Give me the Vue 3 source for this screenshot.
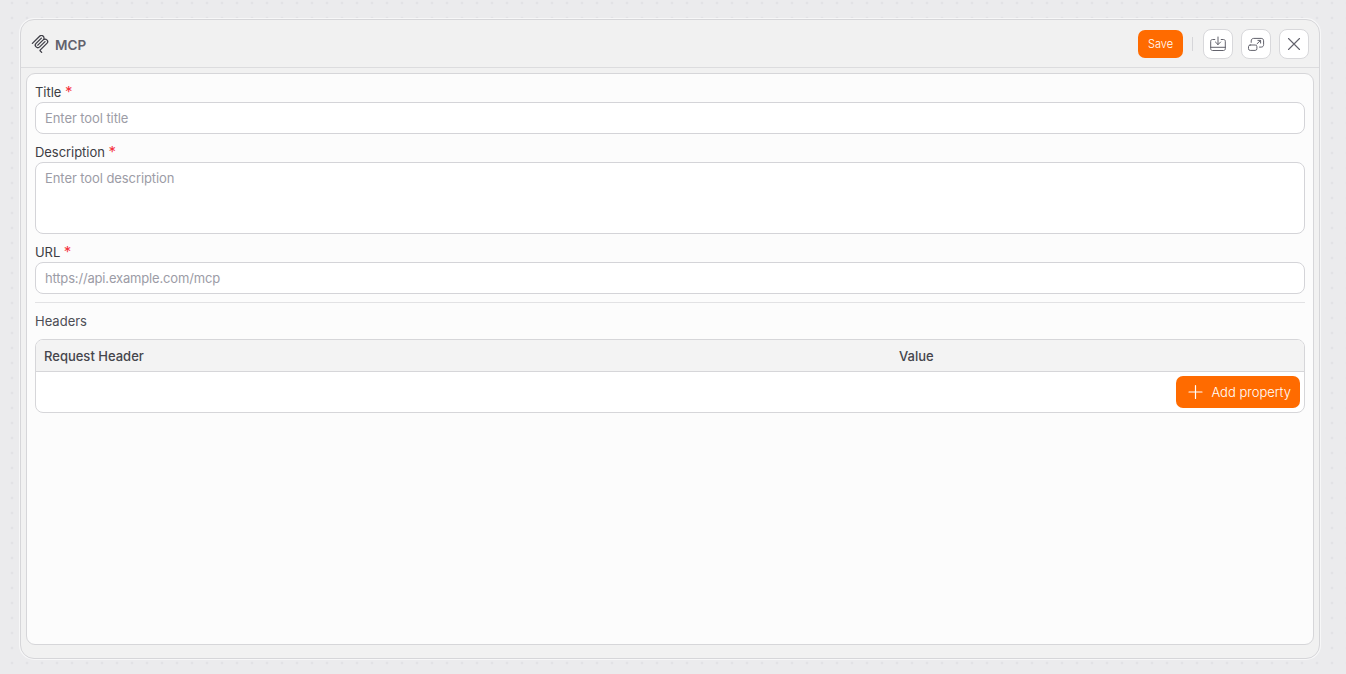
<script setup>
const headers = ['Request Header', 'Value']
</script>

<template>
  <div class="page">
    <section class="panel">
      <header class="head">
        <svg class="logo" width="18" height="18" viewBox="0 0 24 24" fill="#3f3f47">
          <path d="M15.688 2.343a2.588 2.588 0 00-3.61 0l-9.626 9.44a.863.863 0 01-1.203 0 .823.823 0 010-1.18l9.626-9.44a4.313 4.313 0 016.016 0 4.116 4.116 0 011.204 3.54 4.3 4.3 0 013.609 1.18l.05.05a4.115 4.115 0 010 5.9l-8.706 8.537a.274.274 0 000 .393l1.788 1.754a.823.823 0 010 1.18.863.863 0 01-1.203 0l-1.788-1.753a1.92 1.92 0 010-2.754l8.706-8.538a2.47 2.47 0 000-3.54l-.05-.049a2.588 2.588 0 00-3.607-.003l-7.172 7.034-.002.002-.098.097a.863.863 0 01-1.204 0 .823.823 0 010-1.18l7.273-7.133a2.47 2.47 0 00-.003-3.537z" />
          <path d="M14.485 4.703a.823.823 0 000-1.18.863.863 0 00-1.204 0l-7.119 6.982a4.115 4.115 0 000 5.9 4.314 4.314 0 006.016 0l7.12-6.982a.823.823 0 000-1.18.863.863 0 00-1.204 0l-7.119 6.982a2.588 2.588 0 01-3.61 0 2.47 2.47 0 010-3.54l7.12-6.982z" />
        </svg>
        <h1 class="title">MCP</h1>
        <div class="actions">
          <button class="save" type="button">Save</button>
          <span class="sep"></span>
          <button class="icon-btn" type="button" aria-label="Import">
            <svg width="18" height="18" viewBox="0 0 18 18" fill="none" stroke="#62626c" stroke-width="1" stroke-linecap="round" stroke-linejoin="round">
              <path d="M9 2v7.600M6.400 7 9 9.600 11.600 7" />
              <path d="M5.800 4.500H3.500C2.400 4.500 1.700 5.200 1.700 6.300v7.400c0 1.100.7 1.800 1.800 1.800h11c1.100 0 1.800-.7 1.800-1.800V6.300c0-1.100-.7-1.800-1.800-1.800h-2.300" />
              <path d="M1.700 12.300h14.600" />
            </svg>
          </button>
          <button class="icon-btn" type="button" aria-label="Expand">
            <svg width="18" height="18" viewBox="0 0 18 18" fill="none" stroke="#62626c" stroke-width="1" stroke-linecap="round" stroke-linejoin="round">
              <rect x="1.500" y="10" width="8.400" height="5.400" rx="1.700" />
              <path d="M4.200 7.400V6C4.200 4.400 5.100 3.400 6.700 3.400h7.500c1.500 0 2.400.9 2.400 2.400v3.900c0 1.500-.9 2.400-2.400 2.400h-1.700" />
              <path d="M10 8.800l3.400-3.200M10.900 5.400h2.700v2.700" />
            </svg>
          </button>
          <button class="icon-btn" type="button" aria-label="Close">
            <svg width="18" height="18" viewBox="0 0 18 18" fill="none" stroke="#62626c" stroke-width="1.100" stroke-linecap="round">
              <path d="M3.500 3.500l11 11M14.500 3.500l-11 11" />
            </svg>
          </button>
        </div>
      </header>

      <main class="body">
        <label class="label">Title <em>*</em></label>
        <input class="field" placeholder="Enter tool title" />
        <label class="label">Description <em>*</em></label>
        <textarea class="field area" placeholder="Enter tool description"></textarea>
        <label class="label">URL <em>*</em></label>
        <input class="field url" placeholder="https://api.example.com/mcp" />
        <hr class="rule" />
        <div class="sub">Headers</div>
        <div class="table">
          <div class="thead">
            <span v-for="h in headers" :key="h" class="th">{{ h }}</span>
          </div>
          <div class="tfoot">
            <button class="add" type="button">
              <svg width="16" height="16" viewBox="0 0 16 16" fill="none" stroke="#fff" stroke-width="1.200" stroke-linecap="round"><path d="M7.500 1.500v13M1 8h13" /></svg>
              <span>Add property</span>
            </button>
          </div>
        </div>
      </main>
    </section>
  </div>
</template>

<style>
html, body { margin: 0; }
</style>

<style scoped>
.page {
  box-sizing: border-box;
  width: 1346px;
  height: 674px;
  padding: 19px 26px 15px 20px;
  background-color: #ebebed;
  background-image: radial-gradient(circle at center, #d6d6da 0.8px, transparent 1.100px);
  background-size: 15px 15px;
  background-position: 4.500px -4.500px;
  font-family: Inter, "Liberation Sans", sans-serif;
  overflow: hidden;
}
.panel {
  box-sizing: border-box;
  height: 640px;
  display: flex;
  flex-direction: column;
  background: #f1f1f1;
  border: 1px solid #d6d6d9;
  border-radius: 14px;
  box-shadow: 0 0 0 1px #f7f7f8;
}
.head {
  box-sizing: border-box;
  height: 48px;
  flex: none;
  display: flex;
  align-items: center;
  padding: 0 10px;
  border-bottom: 1px solid #dcdcde;
}
.logo { margin-right: 6px; flex: none; }
.title {
  margin: 2px 0 0;
  font-size: 13.500px;
  font-weight: 600;
  color: #62626c;
}
.actions {
  margin-left: auto;
  display: flex;
  align-items: center;
}
.save {
  width: 45px;
  height: 28px;
  padding: 0;
  border: 0;
  border-radius: 7px;
  background: #ff6b00;
  color: #fff;
  font: 300 11px Inter, sans-serif;
}
.sep {
  width: 1px;
  height: 14px;
  margin: 0 10px 0 9px;
  background: #d6d6d9;
}
.icon-btn {
  box-sizing: border-box;
  width: 30px;
  height: 30px;
  margin-right: 8px;
  padding: 0;
  display: grid;
  place-items: center;
  background: #fff;
  border: 1px solid #d8d8db;
  border-radius: 8px;
}
.icon-btn:last-child { margin-right: 0; }
.body {
  box-sizing: border-box;
  flex: 1;
  margin: 5px 5px 13px;
  padding: 8px 8px 0;
  display: flex;
  flex-direction: column;
  background: #fcfcfc;
  border: 1px solid #d6d6d9;
  border-radius: 9px;
}
.label {
  height: 20px;
  line-height: 20px;
  font-size: 13px;
  letter-spacing: -0.05px;
  color: #3d3d44;
}
.label em {
  font-size: 15px;
  font-style: normal;
  color: #f5333f;
}
.field {
  box-sizing: border-box;
  display: block;
  width: 100%;
  height: 32px;
  flex: none;
  margin: 0 0 8px;
  padding: 0 9px;
  background: #fff;
  border: 1px solid #d4d4d8;
  border-radius: 8px;
  outline: none;
  font: 400 13px/20px Inter, sans-serif;
  letter-spacing: -0.08px;
  color: #333;
}
.field::placeholder { color: #9c9ca6; opacity: 1; }
.url { letter-spacing: -0.17px; }
.area {
  height: 72px;
  padding-top: 5px;
  resize: none;
}
.rule {
  width: 100%;
  margin: 0;
  border: 0;
  border-top: 1px solid #e2e2e4;
}
.sub {
  margin-top: 8px;
  height: 20px;
  line-height: 20px;
  font-size: 13px;
  color: #4d4d55;
}
.table {
  margin-top: 8px;
  background: #fff;
  border: 1px solid #d6d6d9;
  border-radius: 8px;
  overflow: hidden;
}
.thead {
  box-sizing: border-box;
  height: 32px;
  display: grid;
  grid-template-columns: 855px 1fr;
  align-items: center;
  padding-left: 8px;
  background: #f3f3f3;
  border-bottom: 1px solid #d6d6d9;
}
.th {
  font-size: 13px;
  font-weight: 500;
  color: #45454c;
}
.tfoot {
  height: 40px;
  display: flex;
  justify-content: flex-end;
  align-items: center;
  padding-right: 4px;
}
.add {
  width: 124px;
  height: 32px;
  padding: 0 9px 0 12px;
  display: flex;
  align-items: center;
  justify-content: space-between;
  border: 0;
  border-radius: 7px;
  background: #ff6b00;
  color: #fff;
  font: 300 13px Inter, sans-serif;
}
</style>
